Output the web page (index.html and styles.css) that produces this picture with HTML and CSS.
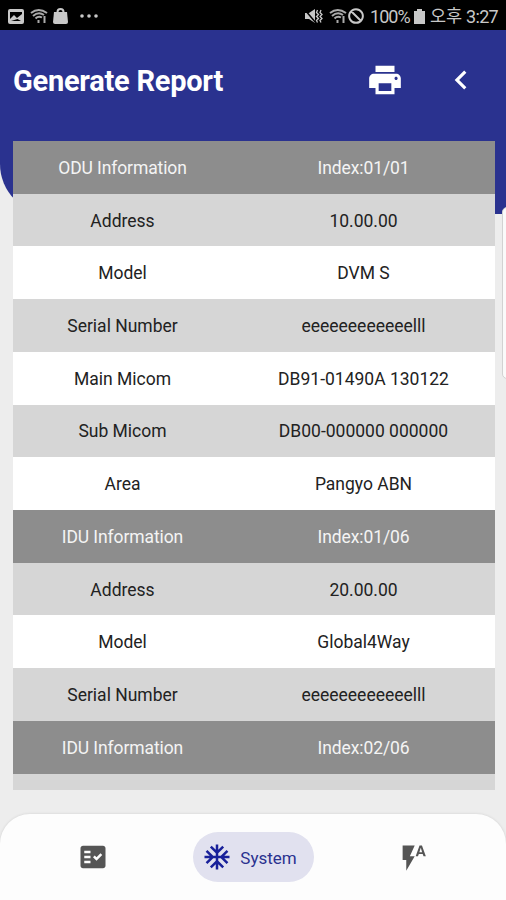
FILE: index.html
```
<!DOCTYPE html>
<html lang="en">
<head>
<meta charset="UTF-8">
<title>Generate Report</title>
<link rel="stylesheet" href="styles.css">
</head>
<body>
	<div class="status">
		<div class="status-left">
			<svg width="16" height="15" viewBox="0 0 16 15"><path fill-rule="evenodd" d="M2 0h12a2 2 0 0 1 2 2v11a2 2 0 0 1-2 2H2a2 2 0 0 1-2-2V2a2 2 0 0 1 2-2zM2 3v7l4-4 3 3 5-4V3zM3 12h10L9.500 10z"/></svg>
			<svg class="wifi" width="18" height="16" viewBox="0 0 18 16"><path d="M1 5Q8.500-1 17 5M3 8Q8.500 3 14 7M5.500 10.500Q8.500 7.500 12 9.500M8.500 12v3M14.500 8v7"/></svg>
			<svg class="bag" width="15" height="16" viewBox="0 0 15 16"><path d="M1 4h13l1 10a2 2 0 0 1-2 2H2a2 2 0 0 1-2-2z"/><path d="M4.500 6V4a3 3 0 0 1 6 0v2" fill="none" stroke="#c8c8c8" stroke-width="2"/></svg>
			<svg class="more" width="18" height="4" viewBox="0 0 18 4"><circle cx="2" cy="2" r="1.800"/><circle cx="9" cy="2" r="1.800"/><circle cx="16" cy="2" r="1.800"/></svg>
		</div>
		<div class="status-right">
			<svg width="19" height="17" viewBox="0 0 19 17"><path d="M1 5h4l6-4v14l-6-4H1z"/><path d="M1 2l11 13" stroke="#000" stroke-width="1.500"/><path d="M13.500 2l-1 2.500 2 2-2 2 2 2-2 2 1 2M17 2l-1 2.500 2 2-2 2 2 2-2 2 1 2" fill="none" stroke="#c8c8c8" stroke-width="1.300"/></svg>
			<svg class="wifi" width="18" height="16" viewBox="0 0 18 16"><path d="M1 5Q8.500-1 17 5M3 8Q8.500 3 14 7M5.500 10.500Q8.500 7.500 12 9.500M8.500 12v3M14.500 8v7"/></svg>
			<svg class="block" width="16" height="16" viewBox="0 0 16 16"><path d="M8 1.200a6.800 6.800 0 1 0 .01 0zM3.200 3.200l9.600 9.600"/></svg>
			<span class="percent">100%</span>
			<svg class="battery" width="11" height="15" viewBox="0 0 11 15"><path d="M3 0h5v2h3v13H0V2h3z"/></svg>
			<span class="ampm">오후</span>
			<span class="time">3:27</span>
		</div>
	</div>

	<header class="header">
		<h1>Generate Report</h1>
		<svg class="print" width="38" height="38" viewBox="0 0 24 24"><path d="M19 8H5c-1.660 0-3 1.340-3 3v6h4v4h12v-4h4v-6c0-1.660-1.340-3-3-3zm-3 11H8v-5h8v5zm3-7c-.550 0-1-.450-1-1s.450-1 1-1 1 .450 1 1-.450 1-1 1zm-1-9H6v4h12V3z"/></svg>
		<svg class="back" width="38" height="38" viewBox="0 0 24 24"><path d="M15.410 7.410L14 6l-6 6 6 6 1.410-1.410L10.830 12z"/></svg>
	</header>

	<main class="report">
		<div class="row head"><span>ODU Information</span><span>Index:01/01</span></div>
		<div class="row gray"><span>Address</span><span>10.00.00</span></div>
		<div class="row"><span>Model</span><span>DVM S</span></div>
		<div class="row gray"><span>Serial Number</span><span>eeeeeeeeeeeelll</span></div>
		<div class="row"><span>Main Micom</span><span>DB91-01490A 130122</span></div>
		<div class="row gray"><span>Sub Micom</span><span>DB00-000000 000000</span></div>
		<div class="row"><span>Area</span><span>Pangyo ABN</span></div>
		<div class="row head"><span>IDU Information</span><span>Index:01/06</span></div>
		<div class="row gray"><span>Address</span><span>20.00.00</span></div>
		<div class="row"><span>Model</span><span>Global4Way</span></div>
		<div class="row gray"><span>Serial Number</span><span>eeeeeeeeeeeelll</span></div>
		<div class="row head"><span>IDU Information</span><span>Index:02/06</span></div>
		<div class="row gray"></div>
	</main>
	<div class="edge"></div>

	<nav class="nav">
		<a class="tab"><svg width="30" height="30" viewBox="0 0 24 24"><path fill-rule="evenodd" d="M20 3H4c-1.100 0-2 .900-2 2v14c0 1.100.900 2 2 2h16c1.100 0 2-.900 2-2V5c0-1.100-.900-2-2-2zM10 17H5v-2h5v2zm0-4H5v-2h5v2zm0-4H5V7h5v2zm4.820 6L12 12.160l1.410-1.410 1.410 1.420L17.990 9l1.420 1.420L14.820 15z"/></svg></a>
		<a class="tab active"><svg width="30" height="30" viewBox="0 0 24 24"><path d="M22 11h-4.170l3.240-3.240-1.410-1.420L15 11h-2V9l4.660-4.660-1.420-1.410L13 6.170V2h-2v4.170L7.760 2.930 6.340 4.340 11 9v2H9L4.340 6.340 2.930 7.760 6.170 11H2v2h4.170l-3.240 3.240 1.410 1.420L9 13h2v2l-4.660 4.660 1.420 1.410L11 17.830V22h2v-4.170l3.240 3.240 1.420-1.410L13 15v-2h2l4.660 4.660 1.410-1.420L17.830 13H22z"/></svg><span>System</span></a>
		<a class="tab"><svg width="29" height="29" viewBox="0 0 24 24"><path d="M3 2v12h3v9l7-12H9l4-9H3zm16 0h-2l-3.200 9h1.900l.700-2h3.200l.700 2h1.900L19 2zm-2.150 5.650L18 4l1.150 3.650h-2.300z"/></svg></a>
	</nav>
</body>
</html>
```

FILE: styles.css
```
* { box-sizing: border-box; }
body { margin: 0; height: 900px; display: flex; flex-direction: column; position: relative; overflow: hidden; background: #ededed; font-family: Roboto, "Noto Sans CJK KR", sans-serif; }
svg { display: block; flex: none; }

.status { height: 30px; flex: none; display: flex; justify-content: space-between; align-items: center; padding: 2px 8px 0; background: #000; color: #c8c8c8; fill: #c8c8c8; }
.status-left, .status-right { display: flex; align-items: center; }
.wifi { fill: none; stroke: #aaa; stroke-width: 2; }
.status-left .wifi { margin-left: 6px; }
.bag { margin-left: 5px; }
.more { margin-left: 12px; }
.status-right .wifi { margin-left: 6px; }
.block { fill: none; stroke: #c8c8c8; stroke-width: 2; margin-left: 1px; }
.percent { font-size: 18px; letter-spacing: -0.9px; margin-left: 6px; }
.battery { margin-left: 4px; }
.ampm { font-size: 17.5px; line-height: 20px; margin-left: 5px; }
.time { font-size: 18px; letter-spacing: -0.7px; margin-left: 4px; }

.header { height: 184px; flex: none; display: flex; align-items: flex-start; padding: 31px 26px 0 13px; background: #2a328f; border-bottom-left-radius: 50px; fill: #fff; }
h1 { flex: 1; margin: 0; font-size: 29px; line-height: 40px; font-weight: 700; letter-spacing: -0.25px; color: #fff; }
.print { margin-right: 38px; }

.report { width: 482px; height: 649px; margin: -73px 0 0 13px; flex: none; overflow: hidden; }
.row { height: 52.72px; display: grid; grid-template-columns: 219px 263px; align-items: center; text-align: center; background: #fff; color: #222; font-size: 17.5px; padding-top: 1px; }
.row.gray { background: #d6d6d6; }
.row.head { background: #8d8d8d; color: #f4f4f4; letter-spacing: -0.1px; }

/* sliver of the next card */
.edge { position: absolute; top: 207px; right: -10px; width: 14px; height: 172px; background: #fafafa; border: 1px solid #d2d2d2; border-radius: 5px; }

.nav { height: 86px; flex: none; margin: auto 0 0; padding: 18px 13px 0 13px; display: grid; grid-template-columns: 160px 160px 160px; align-items: start; background: #fdfdfd; border-radius: 30px 30px 0 0; box-shadow: 0 0 3px rgba(0, 0, 0, 0.12); }
.tab { height: 50px; display: flex; align-items: center; justify-content: center; fill: #555; }
.tab.active { width: 121px; margin-left: 20px; padding-right: 8px; background: #e1e1ef; border-radius: 25px; color: #2a328f; fill: #18209a; font-size: 17px; }
.tab.active span { margin-left: 8px; padding-top: 1px; }
```
